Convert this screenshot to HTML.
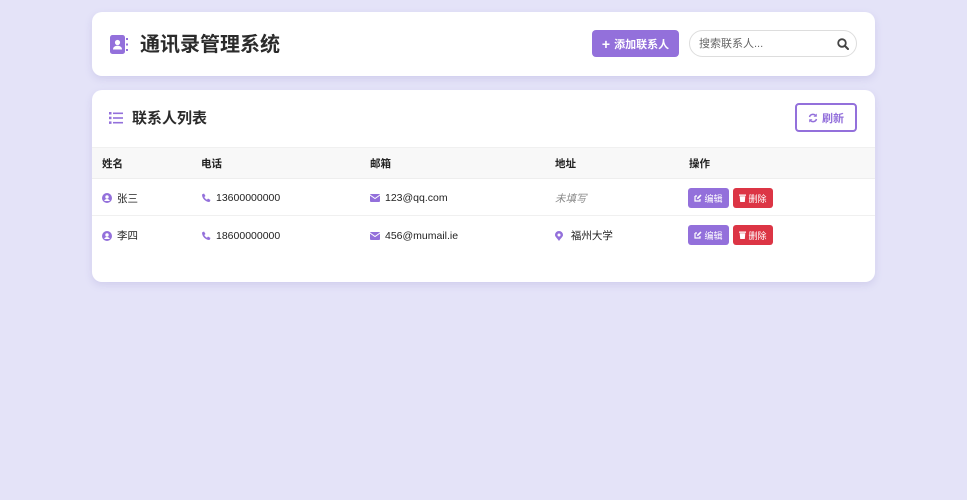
<!DOCTYPE html>
<html><head><meta charset="utf-8"><style>
*{box-sizing:border-box;margin:0;padding:0}
body{width:967px;height:500px;background:#e4e3f8;font-family:"Liberation Sans","Noto Sans CJK SC",sans-serif;color:#333;position:relative;overflow:hidden}
.card{position:absolute;left:92px;width:783px;background:#fff;border-radius:10px;box-shadow:0 3px 8px rgba(120,110,190,.18)}
.c1{top:12px;height:64px}
.c2{top:90px;height:192px;overflow:hidden}
.title{position:absolute;left:48px;top:19px;font-size:20px;font-weight:bold;color:#2b2b2b;line-height:28px}
.addbtn{position:absolute;left:500px;top:18px;width:87px;height:27px;background:#9370db;border-radius:4px;color:#fff;font-size:11px;font-weight:bold;display:flex;align-items:center;justify-content:center;gap:4px}
.search{position:absolute;left:597px;top:18px;width:168px;height:27px;border:1px solid #ddd;border-radius:14px;font-size:11px;color:#666;padding:1px 0 0 9px;line-height:25px}
.h2{position:absolute;left:40px;top:18px;font-size:15px;font-weight:bold;color:#2b2b2b;line-height:22px}
.refresh{position:absolute;left:703px;top:13px;width:62px;height:29px;border:2px solid #9370db;border-radius:4px;color:#9370db;font-size:11px;font-weight:bold;display:flex;align-items:center;justify-content:center;gap:4px}
.thead{position:absolute;left:0;top:57px;width:783px;height:32px;background:#f8f8f8;border-bottom:1px solid #eee;border-top:1px solid #f0f0f0}
.row{position:absolute;left:0;width:783px;height:37px}
.r1{border-bottom:1px solid #f0f0f0}
.cell{position:absolute;font-size:10.5px;color:#222;display:flex;align-items:center;gap:5px;height:100%;padding-top:2px}
.th{font-weight:bold;font-size:10.5px;padding-top:0}
.btn{height:20px;border-radius:3px;color:#fff;font-size:9px;display:flex;align-items:center;justify-content:center;gap:2px;position:absolute;top:9px}
.ed{background:#9370db;width:41px;left:0}
.de{background:#dc3545;width:40px;left:45px}
</style></head><body>
<div class="card c1">
 <svg style="position:absolute;left:18px;top:23px" width="18" height="19" viewBox="0 0 18 19"><rect x="0" y="0" width="15" height="19" rx="2.5" fill="#9370db"/><circle cx="7.5" cy="7.5" r="2.6" fill="#fff"/><path d="M3 14.5c0-2.5 2-3.8 4.5-3.8s4.5 1.3 4.5 3.8z" fill="#fff"/><rect x="16" y="3" width="2" height="2" fill="#9370db"/><rect x="16" y="8.5" width="2" height="2" fill="#9370db"/><rect x="16" y="14" width="2" height="2" fill="#9370db"/></svg>
 <div class="title">通讯录管理系统</div>
 <div class="addbtn"><span style="font-size:14px;line-height:1">+</span>添加联系人</div>
 <div class="search">搜索联系人...<svg style="position:absolute;right:7px;top:7px" width="12" height="12" viewBox="0 0 12 12"><circle cx="5" cy="5" r="3.8" stroke="#444" stroke-width="1.8" fill="none"/><path d="M8 8l3 3" stroke="#444" stroke-width="2" stroke-linecap="round"/></svg></div>
</div>
<div class="card c2">
 <svg style="position:absolute;left:17px;top:22px" width="14" height="12" viewBox="0 0 14 12"><g fill="#9370db"><rect x="0" y="0" width="2.5" height="2.5"/><rect x="0" y="4.7" width="2.5" height="2.5"/><rect x="0" y="9.4" width="2.5" height="2.5"/><rect x="4" y=".5" width="10" height="1.6"/><rect x="4" y="5.2" width="10" height="1.6"/><rect x="4" y="9.9" width="10" height="1.6"/></g></svg>
 <div class="h2">联系人列表</div>
 <div class="refresh"><svg width="10" height="10" viewBox="0 0 10 10"><path d="M1.5 4A3.6 3.6 0 0 1 8 3M8.5 6A3.6 3.6 0 0 1 2 7" stroke="#9370db" stroke-width="1.5" fill="none"/><path d="M8.8 .5v3.3H5.5zM1.2 9.5V6.2h3.3z" fill="#9370db"/></svg>刷新</div>
 <div class="thead">
  <div class="cell th" style="left:10px">姓名</div>
  <div class="cell th" style="left:109px">电话</div>
  <div class="cell th" style="left:278px">邮箱</div>
  <div class="cell th" style="left:463px">地址</div>
  <div class="cell th" style="left:597px">操作</div>
 </div>
 <div class="row r1" style="top:89px">
  <div class="cell" style="left:10px"><svg width="10" height="10" viewBox="0 0 10 10"><circle cx="5" cy="5" r="5" fill="#9370db"/><circle cx="5" cy="4" r="1.7" fill="#fff"/><path d="M2.2 8c.5-1.5 1.5-2 2.8-2s2.3.5 2.8 2z" fill="#fff"/></svg>张三</div>
  <div class="cell" style="left:109px"><svg width="10" height="10" viewBox="0 0 10 10"><path d="M1 1.5 3 .5l1.5 2.5-1.2 1c.5 1.2 1.5 2.2 2.7 2.7l1-1.2L9.5 7 8.5 9C4.5 9 1 5.5 1 1.5z" fill="#9370db"/></svg>13600000000</div>
  <div class="cell" style="left:278px"><svg width="10" height="8" viewBox="0 0 10 8"><rect width="10" height="8" rx="1" fill="#9370db"/><path d="M0 1l5 3.5L10 1" stroke="#fff" stroke-width="1" fill="none"/></svg>123@qq.com</div>
  <div class="cell" style="left:463px;color:#888;font-style:italic">未填写</div>
  <div class="cell" style="left:596px;width:90px">
   <div class="btn ed"><svg width="8" height="8" viewBox="0 0 8 8"><path d="M1 2h2M1 2v5h5V5" stroke="#fff" stroke-width="1.2" fill="none"/><path d="M3 5l.3-1.5L6.5.5 7.5 1.5 4.5 4.7z" fill="#fff"/></svg>编辑</div>
   <div class="btn de"><svg width="7" height="8" viewBox="0 0 7 8"><rect x="0" y="0.5" width="7" height="1.3" fill="#fff"/><path d="M.7 2.3h5.6L5.8 8H1.2z" fill="#fff"/></svg>删除</div>
  </div>
 </div>
 <div class="row" style="top:126px">
  <div class="cell" style="left:10px"><svg width="10" height="10" viewBox="0 0 10 10"><circle cx="5" cy="5" r="5" fill="#9370db"/><circle cx="5" cy="4" r="1.7" fill="#fff"/><path d="M2.2 8c.5-1.5 1.5-2 2.8-2s2.3.5 2.8 2z" fill="#fff"/></svg>李四</div>
  <div class="cell" style="left:109px"><svg width="10" height="10" viewBox="0 0 10 10"><path d="M1 1.5 3 .5l1.5 2.5-1.2 1c.5 1.2 1.5 2.2 2.7 2.7l1-1.2L9.5 7 8.5 9C4.5 9 1 5.5 1 1.5z" fill="#9370db"/></svg>18600000000</div>
  <div class="cell" style="left:278px"><svg width="10" height="8" viewBox="0 0 10 8"><rect width="10" height="8" rx="1" fill="#9370db"/><path d="M0 1l5 3.5L10 1" stroke="#fff" stroke-width="1" fill="none"/></svg>456@mumail.ie</div>
  <div class="cell" style="left:463px"><svg width="8" height="10" viewBox="0 0 8 10"><path d="M4 10C1.5 6.5 0 5.5 0 4a4 4 0 0 1 8 0c0 1.5-1.5 2.5-4 6z" fill="#9370db"/><circle cx="4" cy="4" r="1.5" fill="#fff"/></svg>&nbsp;福州大学</div>
  <div class="cell" style="left:596px;width:90px">
   <div class="btn ed"><svg width="8" height="8" viewBox="0 0 8 8"><path d="M1 2h2M1 2v5h5V5" stroke="#fff" stroke-width="1.2" fill="none"/><path d="M3 5l.3-1.5L6.5.5 7.5 1.5 4.5 4.7z" fill="#fff"/></svg>编辑</div>
   <div class="btn de"><svg width="7" height="8" viewBox="0 0 7 8"><rect x="0" y="0.5" width="7" height="1.3" fill="#fff"/><path d="M.7 2.3h5.6L5.8 8H1.2z" fill="#fff"/></svg>删除</div>
  </div>
 </div>
</div>
</body></html>
